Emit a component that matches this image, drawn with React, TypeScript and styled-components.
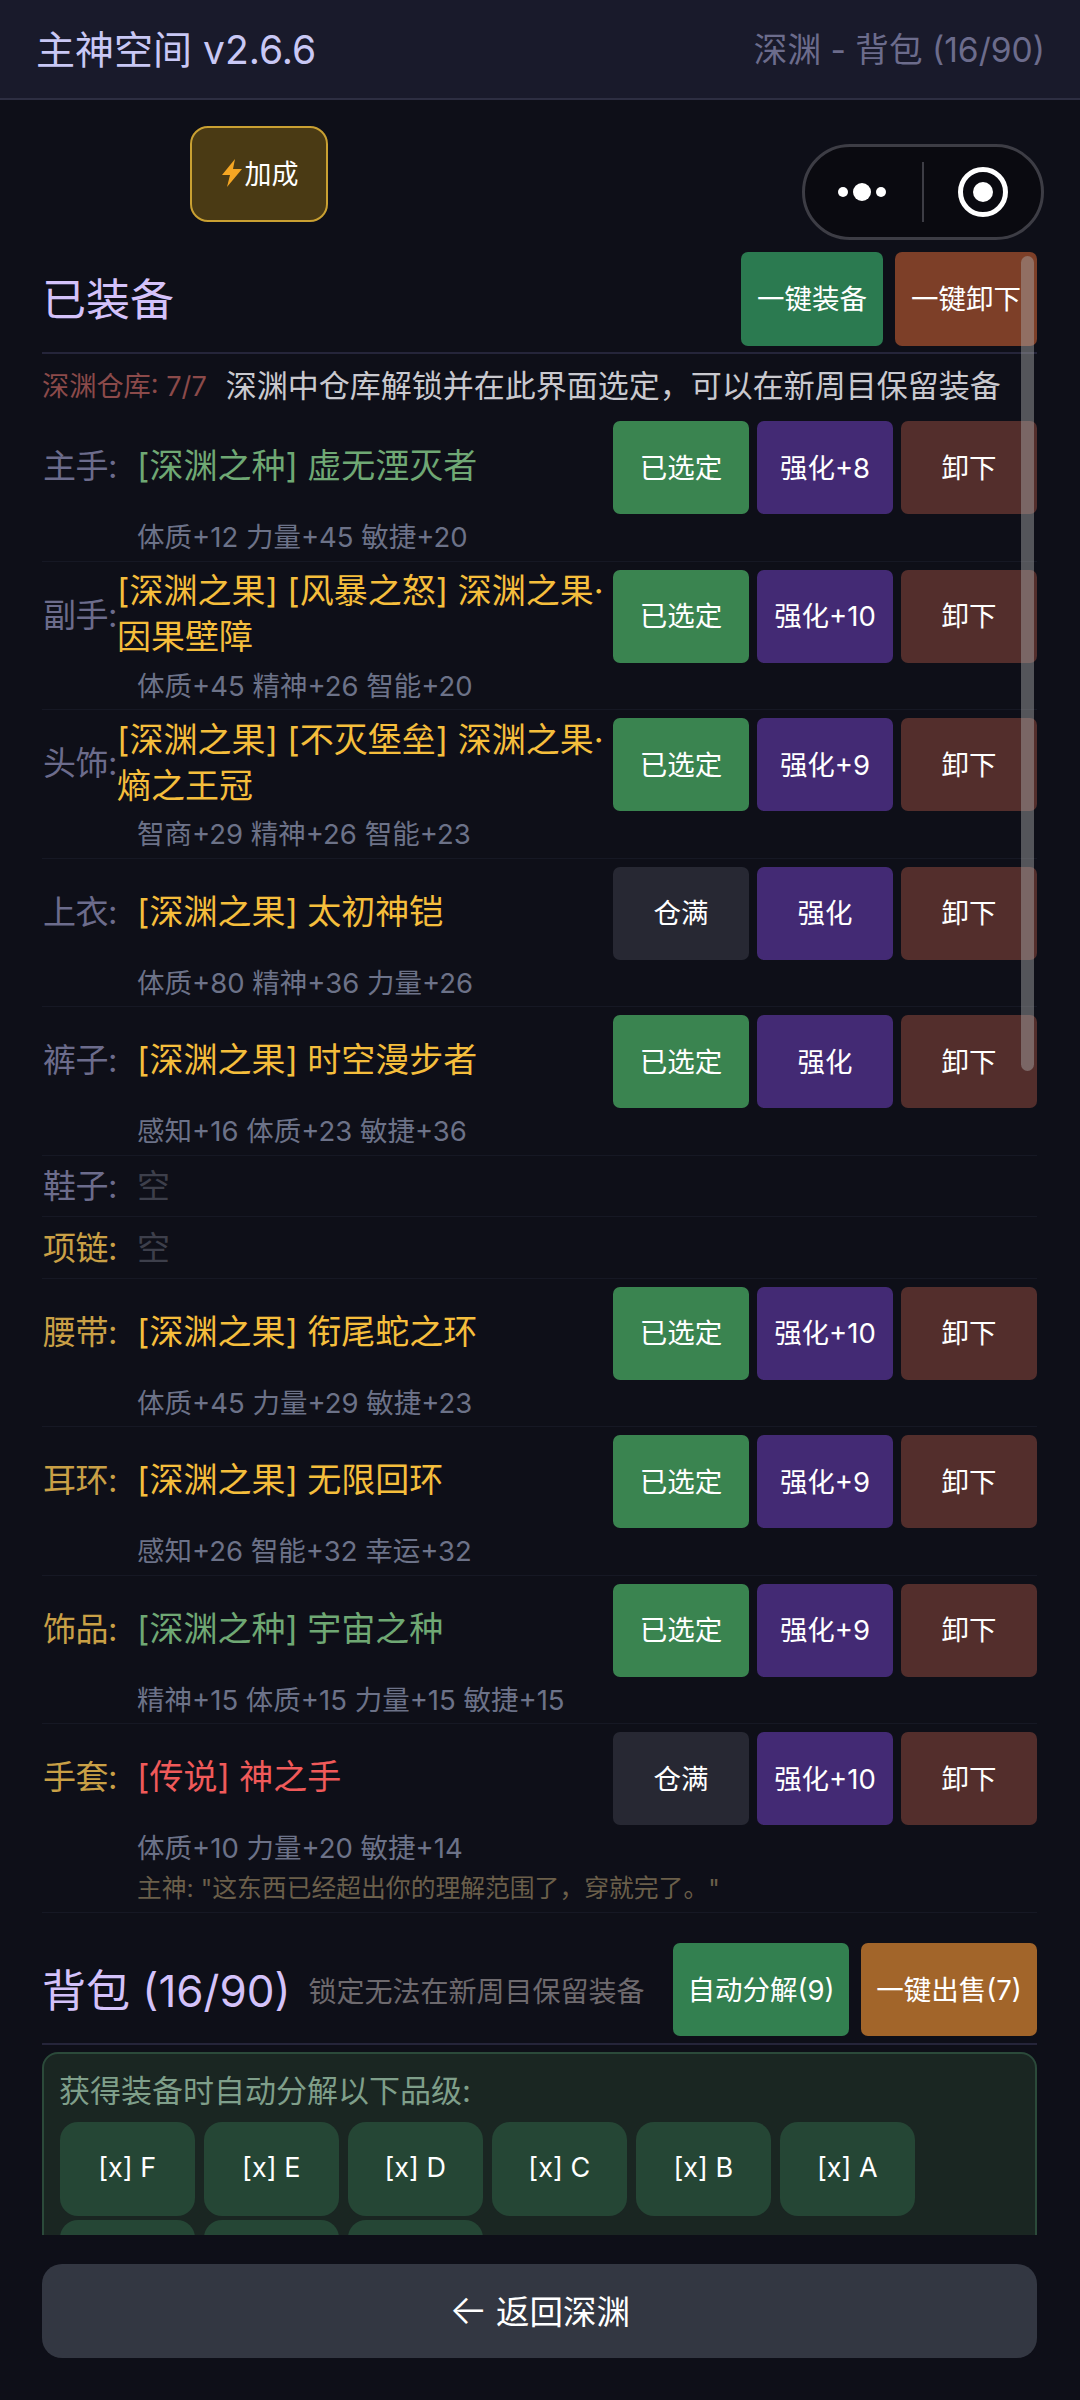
import React from "react";
import styled, { createGlobalStyle } from "styled-components";

const GlobalStyle = createGlobalStyle`
  html, body {
    margin: 0;
    padding: 0;
    background: #0e0f18;
  }
  * {
    box-sizing: border-box;
  }
  body {
    font-family: "Inter", "Noto Sans CJK SC", sans-serif;
  }
`;

const Page = styled.div`
  position: relative;
  width: 1080px;
  height: 2400px;
  display: flex;
  flex-direction: column;
  background: #0e0f18;
  overflow: hidden;
`;

const Header = styled.div`
  height: 100px;
  flex: none;
  display: flex;
  justify-content: space-between;
  align-items: center;
  padding: 0 35px 4px 36px;
  background: #191a2b;
  border-bottom: 2px solid #2d2e42;
`;

const Title = styled.div`
  font-size: 39px;
  color: #c9c8f5;
`;

const HeaderInfo = styled.div`
  font-size: 33.6px;
  color: #6c6c8c;
`;

const Capsule = styled.div`
  position: absolute;
  left: 802px;
  top: 144px;
  width: 242px;
  height: 96px;
  display: flex;
  align-items: center;
  border: 3px solid #3d3d45;
  border-radius: 48px;
  background: #0a0a10;
`;

const CapsuleHalf = styled.div`
  flex: 1;
  height: 100%;
  display: flex;
  align-items: center;
  justify-content: center;
`;

const CapsuleDivider = styled.div`
  width: 2px;
  height: 60px;
  background: #3d3d45;
`;

const ScrollThumb = styled.div`
  position: absolute;
  left: 1021px;
  top: 256px;
  width: 13px;
  height: 815px;
  border-radius: 7px;
  background: rgba(170, 170, 170, 0.45);
`;

const Scroller = styled.div`
  flex: 1;
  min-height: 0;
  overflow: hidden;
  padding: 26px 43px 0 42px;
`;

const BonusButton = styled.div`
  width: 138px;
  height: 96px;
  margin-left: 148px;
  padding-bottom: 3px;
  display: flex;
  align-items: center;
  justify-content: center;
  gap: 1px;
  background: #4a3a14;
  border: 2px solid #c9a032;
  border-radius: 18px;
  color: #fff;
  font-size: 27px;
`;

const SectionHead = styled.div<{ $mt: number }>`
  display: flex;
  align-items: center;
  margin-top: ${(p) => p.$mt}px;
  height: 102px;
  padding-bottom: 6px;
  border-bottom: 2px solid #25253a;
`;

const SectionTitle = styled.div`
  padding-bottom: 4px;
  font-size: 44px;
  color: #d4c2fa;
  white-space: nowrap;
`;

const SectionHint = styled.div`
  flex: 1;
  margin-left: 18px;
  font-size: 28px;
  color: #6e6a6e;
  white-space: nowrap;
`;

const SectionActions = styled.div`
  margin-left: auto;
  flex: none;
  display: flex;
  gap: 12px;
`;

const Button = styled.div<{ $bg: string; $w: number; $h: number }>`
  flex: none;
  width: ${(p) => p.$w}px;
  height: ${(p) => p.$h}px;
  padding-bottom: 4px;
  display: flex;
  align-items: center;
  justify-content: center;
  background: ${(p) => p.$bg};
  border-radius: 7px;
  color: #fff;
  font-size: 27.5px;
  white-space: nowrap;
`;

const Notice = styled.div`
  display: flex;
  align-items: center;
  height: 59px;
  gap: 19px;
  white-space: nowrap;
`;

const NoticeCount = styled.span`
  font-size: 27.2px;
  color: #8b4a4a;
`;

const NoticeText = styled.span`
  font-size: 31px;
  color: #c9c9cf;
`;

const Row = styled.div`
  padding: 8px 0 4px;
  border-bottom: 1px solid #161824;
`;

const RowMain = styled.div`
  display: flex;
  align-items: center;
  min-height: 48.5px;
`;

const Slot = styled.div<{ $color: string }>`
  flex: none;
  width: 75px;
  padding: 0 0 3px 1px;
  font-size: 33px;
  line-height: 40px;
  letter-spacing: -0.5px;
  color: ${(p) => p.$color};
  white-space: nowrap;
`;

const ItemName = styled.div<{ $color: string; $wrapped?: boolean }>`
  flex: 1;
  min-width: 0;
  margin-top: ${(p) => (p.$wrapped ? -4 : -3)}px;
  padding-left: ${(p) => (p.$wrapped ? 0 : 20)}px;
  font-size: 34px;
  line-height: 46px;
  color: ${(p) => p.$color};
`;

const Empty = styled.div`
  padding: 0 0 3px 20px;
  font-size: 33px;
  line-height: 40px;
  color: #3d3f4b;
`;

const Actions = styled.div`
  flex: none;
  display: flex;
  gap: 8px;
`;

const Stats = styled.div`
  margin-top: 4px;
  padding-left: 95px;
  font-size: 27.5px;
  line-height: 38.5px;
  color: #6c7288;
`;

const Quote = styled.div`
  padding-left: 95px;
  font-size: 24.8px;
  line-height: 40px;
  color: #6b5f4a;
`;

const Panel = styled.div`
  margin-top: 7px;
  padding: 16px 16px 16px 15px;
  background: #1a2622;
  border: 2px solid #2b4a3a;
  border-radius: 16px;
`;

const PanelLabel = styled.div`
  padding-bottom: 2px;
  font-size: 31px;
  line-height: 42px;
  color: #7f9f8a;
`;

const Chips = styled.div`
  display: grid;
  grid-template-columns: repeat(6, 134.5px);
  gap: 4px 9.5px;
  margin: 8px 0 0 1px;
`;

const Chip = styled.div`
  height: 94px;
  padding-bottom: 2px;
  display: flex;
  align-items: center;
  justify-content: center;
  background: #254635;
  border-radius: 18px;
  color: #fff;
  font-size: 27px;
`;

const Footer = styled.div`
  flex: none;
  height: 165px;
  padding: 29px 43px 0 42px;
`;

const BackButton = styled.div`
  height: 94px;
  padding-bottom: 3px;
  display: flex;
  align-items: center;
  justify-content: center;
  gap: 8px;
  background: #333742;
  border-radius: 20px;
  color: #fff;
  font-size: 33.5px;
`;

const BackArrow = styled.span`
  font-size: 41px;
  font-weight: 300;
  line-height: 1;
`;

const BLUE = "#6c6c8c";
const GOLD = "#c9a046";
const ABYSS_GREEN = "#6fa874";
const YELLOW = "#f5be3c";
const RED = "#f05a5a";

const PICKED = "#3a8450";
const FULL = "#272833";
const ENHANCE = "#432a74";
const REMOVE = "#532e2c";

interface EquipRow {
  slot: string;
  slotColor: string;
  name?: string;
  nameColor?: string;
  wrapped?: boolean;
  stats?: string;
  full?: boolean;
  enhance?: string;
  quote?: string;
}

const rows: EquipRow[] = [
  { slot: "主手:", slotColor: BLUE, name: "[深渊之种] 虚无湮灭者", nameColor: ABYSS_GREEN, stats: "体质+12 力量+45 敏捷+20", enhance: "强化+8" },
  { slot: "副手:", slotColor: BLUE, name: "[深渊之果] [风暴之怒] 深渊之果·因果壁障", nameColor: YELLOW, wrapped: true, stats: "体质+45 精神+26 智能+20", enhance: "强化+10" },
  { slot: "头饰:", slotColor: BLUE, name: "[深渊之果] [不灭堡垒] 深渊之果·熵之王冠", nameColor: YELLOW, wrapped: true, stats: "智商+29 精神+26 智能+23", enhance: "强化+9" },
  { slot: "上衣:", slotColor: BLUE, name: "[深渊之果] 太初神铠", nameColor: YELLOW, stats: "体质+80 精神+36 力量+26", full: true, enhance: "强化" },
  { slot: "裤子:", slotColor: BLUE, name: "[深渊之果] 时空漫步者", nameColor: YELLOW, stats: "感知+16 体质+23 敏捷+36", enhance: "强化" },
  { slot: "鞋子:", slotColor: BLUE },
  { slot: "项链:", slotColor: GOLD },
  { slot: "腰带:", slotColor: GOLD, name: "[深渊之果] 衔尾蛇之环", nameColor: YELLOW, stats: "体质+45 力量+29 敏捷+23", enhance: "强化+10" },
  { slot: "耳环:", slotColor: GOLD, name: "[深渊之果] 无限回环", nameColor: YELLOW, stats: "感知+26 智能+32 幸运+32", enhance: "强化+9" },
  { slot: "饰品:", slotColor: GOLD, name: "[深渊之种] 宇宙之种", nameColor: ABYSS_GREEN, stats: "精神+15 体质+15 力量+15 敏捷+15", enhance: "强化+9" },
  { slot: "手套:", slotColor: GOLD, name: "[传说] 神之手", nameColor: RED, stats: "体质+10 力量+20 敏捷+14", full: true, enhance: "强化+10", quote: "主神: \"这东西已经超出你的理解范围了，穿就完了。\"" },
];

const grades = ["F", "E", "D", "C", "B", "A", "S", "SS", "SSS"];

export default function App() {
  return (
    <>
      <GlobalStyle />
      <Page>
        <Header>
          <Title>主神空间 v2.6.6</Title>
          <HeaderInfo>深渊 - 背包 (16/90)</HeaderInfo>
        </Header>
        <Scroller>
          <BonusButton>
            <svg width="24" height="28" viewBox="0 0 24 28">
              <path d="M15 0 L2 16 H10 L7 28 L22 10 H13 Z" fill="#f5a623" />
            </svg>
            加成
          </BonusButton>
          <SectionHead $mt={30}>
            <SectionTitle>已装备</SectionTitle>
            <SectionActions>
              <Button $bg="#2b7a50" $w={142} $h={94}>一键装备</Button>
              <Button $bg="#7d3f28" $w={142} $h={94}>一键卸下</Button>
            </SectionActions>
          </SectionHead>
          <Notice>
            <NoticeCount>深渊仓库: 7/7</NoticeCount>
            <NoticeText>深渊中仓库解锁并在此界面选定，可以在新周目保留装备</NoticeText>
          </Notice>
          {rows.map((row) => (
            <Row key={row.slot}>
              <RowMain>
                <Slot $color={row.slotColor}>{row.slot}</Slot>
                {row.name ? (
                  <>
                    <ItemName $color={row.nameColor ?? YELLOW} $wrapped={row.wrapped}>{row.name}</ItemName>
                    <Actions>
                      <Button $bg={row.full ? FULL : PICKED} $w={136} $h={93}>{row.full ? "仓满" : "已选定"}</Button>
                      <Button $bg={ENHANCE} $w={136} $h={93}>{row.enhance}</Button>
                      <Button $bg={REMOVE} $w={136} $h={93}>卸下</Button>
                    </Actions>
                  </>
                ) : (
                  <Empty>空</Empty>
                )}
              </RowMain>
              {row.stats && <Stats>{row.stats}</Stats>}
              {row.quote && <Quote>{row.quote}</Quote>}
            </Row>
          ))}
          <SectionHead $mt={30}>
            <SectionTitle>背包 (16/90)</SectionTitle>
            <SectionHint>锁定无法在新周目保留装备</SectionHint>
            <SectionActions>
              <Button $bg="#338050" $w={176} $h={93}>自动分解(9)</Button>
              <Button $bg="#a2652a" $w={176} $h={93}>一键出售(7)</Button>
            </SectionActions>
          </SectionHead>
          <Panel>
            <PanelLabel>获得装备时自动分解以下品级:</PanelLabel>
            <Chips>
              {grades.map((grade) => (
                <Chip key={grade}>[x] {grade}</Chip>
              ))}
            </Chips>
          </Panel>
        </Scroller>
        <Footer>
          <BackButton>
            <BackArrow>←</BackArrow>
            返回深渊
          </BackButton>
        </Footer>
        <Capsule>
          <CapsuleHalf>
            <svg width="56" height="20" viewBox="0 0 56 20">
              <circle cx="7" cy="10" r="5" fill="#fff" />
              <circle cx="26" cy="10" r="9" fill="#fff" />
              <circle cx="45" cy="10" r="5" fill="#fff" />
            </svg>
          </CapsuleHalf>
          <CapsuleDivider />
          <CapsuleHalf>
            <svg width="50" height="50" viewBox="0 0 50 50">
              <circle cx="25" cy="25" r="22.5" fill="none" stroke="#fff" strokeWidth="5" />
              <circle cx="25" cy="25" r="10" fill="#fff" />
            </svg>
          </CapsuleHalf>
        </Capsule>
        <ScrollThumb />
      </Page>
    </>
  );
}
